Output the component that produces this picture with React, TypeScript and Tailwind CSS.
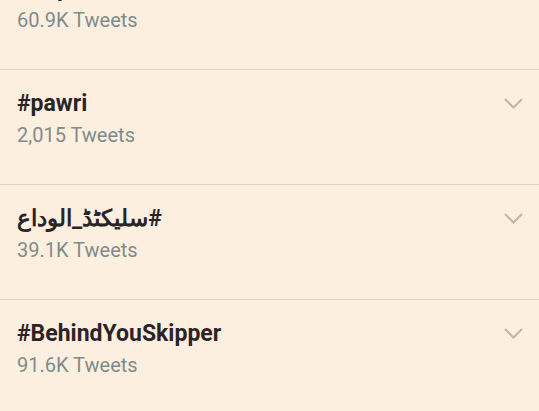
const TRENDS = [
  { tag: '#Sapna', count: '60.9K Tweets', rtl: false },
  { tag: '#pawri', count: '2,015 Tweets', rtl: false },
  { tag: '#سلیکٹڈ_الوداع', count: '39.1K Tweets', rtl: true },
  { tag: '#BehindYouSkipper', count: '91.6K Tweets', rtl: false },
];

function Chevron() {
  return (
    <svg width="19" height="11" viewBox="0 0 19 11" className="mt-[28px] shrink-0">
      <polyline points="1,1 9.5,9.5 18,1" fill="none" stroke="#bdb5ac" strokeWidth="2" />
    </svg>
  );
}

export default function App() {
  return (
    <div
      className="h-[411px] w-[539px] overflow-hidden bg-[#fdefe0]"
      style={{ fontFamily: 'Roboto, "Noto Sans", sans-serif' }}
    >
      <div className="-mt-[45px]">
        {TRENDS.map((t) => (
          <div
            key={t.tag}
            className="flex h-[115px] items-start justify-between border-b border-[#ddd3c8] pl-[17px] pr-[16px]"
          >
            <div className="pt-[21px]">
              <div className="text-[23px] leading-[26px] font-bold text-[#2b2427]">
                <span dir={t.rtl ? 'rtl' : undefined} className="inline-block">
                  {t.tag}
                </span>
              </div>
              <div className="mt-[6px] text-[20px] leading-[24px] text-[#7f8b8b]">{t.count}</div>
            </div>
            <Chevron />
          </div>
        ))}
      </div>
    </div>
  );
}
